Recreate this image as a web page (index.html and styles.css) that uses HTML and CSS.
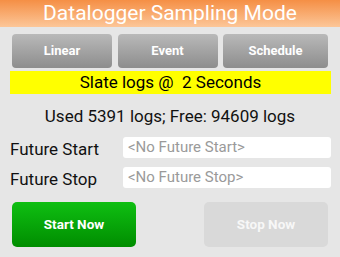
FILE: index.html
```html
<!DOCTYPE html>
<html>
<head>
<meta charset="utf-8">
<link rel="stylesheet" href="styles.css">
</head>
<body>
<div class="header">Datalogger Sampling Mode</div>
<div class="modes">
  <div class="mode">Linear</div>
  <div class="mode">Event</div>
  <div class="mode">Schedule</div>
</div>
<div class="status">Slate logs @&nbsp; 2 Seconds</div>
<div class="usage">Used 5391 logs; Free: 94609 logs</div>
<div class="row">
  <div class="label">Future Start</div>
  <div class="field">&lt;No Future Start&gt;</div>
</div>
<div class="row row2">
  <div class="label">Future Stop</div>
  <div class="field">&lt;No Future Stop&gt;</div>
</div>
<div class="actions">
  <div class="action start">Start Now</div>
  <div class="action stop">Stop Now</div>
</div>
</body>
</html>
```
FILE: styles.css
```css
html, body {
  margin: 0;
  padding: 0;
}
body {
  background: #e6e6e6;
  font-family: Roboto, "Liberation Sans", sans-serif;
  width: 340px;
  height: 257px;
  overflow: hidden;
}
.header {
  height: 27px;
  line-height: 27px;
  text-align: center;
  color: #ffffff;
  font-size: 21px;
  background: linear-gradient(#f58f45, #fcc698);
}
.modes {
  display: grid;
  grid-template-columns: 100px 100px 105px;
  column-gap: 5.5px;
  margin: 7px 12px 0 12px;
}
.mode {
  height: 34px;
  line-height: 34px;
  text-align: center;
  color: #ffffff;
  font-weight: bold;
  font-size: 13px;
  border-radius: 4px;
  background: linear-gradient(#b9b9b9, #8d8d8d);
}
.status {
  margin: 3px 9px 0 10px;
  height: 23px;
  line-height: 23px;
  background: #ffff00;
  color: #000000;
  text-align: center;
  font-size: 17px;
}
.usage {
  margin-top: 12px;
  line-height: 20px;
  text-align: center;
  font-size: 17px;
  color: #111111;
}
.row {
  display: flex;
  align-items: flex-start;
  margin: 11px 9px 0 10px;
}
.row2 {
  margin-top: 6px;
}
.label {
  width: 113px;
  line-height: 24px;
  font-size: 17px;
  color: #111111;
}
.field {
  flex: 1;
  height: 21px;
  line-height: 21px;
  background: #ffffff;
  border-radius: 3px;
  padding-left: 5px;
  font-size: 15px;
  color: #9a9a9a;
}
.actions {
  display: flex;
  justify-content: space-between;
  margin: 11px 12px 0 12px;
}
.action {
  width: 124px;
  height: 45px;
  line-height: 45px;
  text-align: center;
  font-weight: bold;
  font-size: 13.5px;
  border-radius: 5px;
  color: #ffffff;
}
.start {
  background: linear-gradient(#0fbf12, #008d00);
}
.stop {
  background: #d9d9d9;
  color: #f7f7f7;
}
```
